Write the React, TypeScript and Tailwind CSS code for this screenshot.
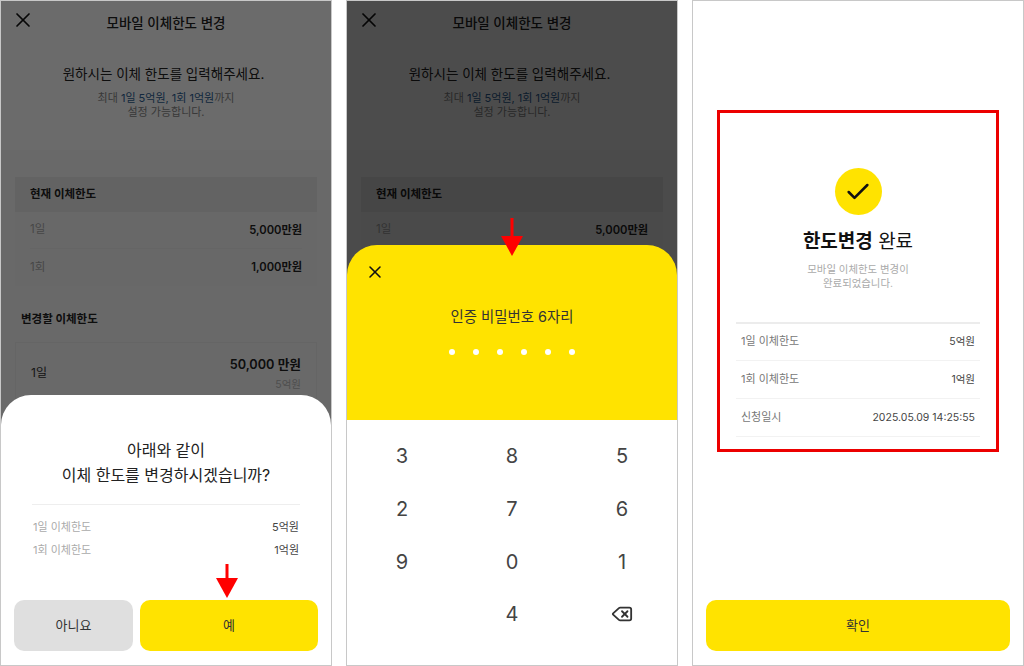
import React from "react";
import { X, Check, Delete } from "lucide-react";

function Arrow({ className, stem }: { className: string; stem: number }) {
  return (
    <svg className={className} width="24" height={stem + 20} viewBox={`0 0 24 ${stem + 20}`} aria-hidden="true">
      <rect x="10.5" y="0" width="3" height={stem + 2} fill="#ff0000" />
      <polygon points={`1,${stem} 23,${stem} 12,${stem + 20}`} fill="#ff0000" />
    </svg>
  );
}

function Background({ dim }: { dim: string }) {
  return (
    <div className="absolute inset-0 flex flex-col bg-white">
      <div className="relative h-[45px] shrink-0 flex items-center justify-center">
        <X className="absolute left-[10px] top-[7px] text-[#111]" size={24} strokeWidth={1.7} />
        <span className="text-[13.5px] font-medium text-[#222]">모바일 이체한도 변경</span>
      </div>
      <div className="h-[104px] shrink-0 flex flex-col items-center pt-[17px]">
        <p className="text-[13.5px] leading-[22px] text-[#222] mr-[5px]">원하시는 이체 한도를 입력해주세요.</p>
        <p className="text-[11px] leading-[14px] mt-[6px] text-[#888] text-center">
          최대 <span className="text-[#2c5e93]">1일 5억원, 1회 1억원</span>까지
          <br />
          설정 가능합니다.
        </p>
      </div>
      <div className="flex-1 bg-[#fafafa] px-[14px] pt-[27px]">
        <div className="h-[35px] flex items-center bg-[#ececec] px-[15px] text-[11.5px] font-bold text-[#222]">현재 이체한도</div>
        <div className="bg-[#f8f8f8] px-[15px] h-[74px] flex flex-col">
          <div className="h-[37px] flex items-center justify-between border-b border-[#f0f0f0] text-[#aaa] text-[11.5px]">
            <span>1일</span>
            <span className="font-semibold text-[11.2px] text-[#222]">5,000만원</span>
          </div>
          <div className="h-[37px] flex items-center justify-between text-[#aaa] text-[11.5px]">
            <span>1회</span>
            <span className="font-semibold text-[11.2px] text-[#222]">1,000만원</span>
          </div>
        </div>
        <p className="mt-[25px] ml-[6px] text-[11.5px] font-bold text-[#222]">변경할 이체한도</p>
        <div className="mt-[14px] h-[100px] border border-[#f0f0f0] px-[15px] pt-[12px] flex justify-between">
          <span className="text-[12px] text-[#333] mt-[9px]">1일</span>
          <div className="flex flex-col items-end">
            <span className="text-[12.7px] leading-[20px] font-semibold text-[#222]">50,000 만원</span>
            <span className="text-[10.5px] leading-[14px] mt-[3px] text-[#bbb]">5억원</span>
          </div>
        </div>
      </div>
      <div className={`absolute inset-0 ${dim}`} />
    </div>
  );
}

function Phone({ children }: { children: React.ReactNode }) {
  return (
    <div className="relative w-[332px] h-[666px] shrink-0 border border-[#c8c8c8] overflow-hidden bg-white flex flex-col">
      {children}
    </div>
  );
}

function ConfirmSheet() {
  return (
    <div className="absolute left-0 right-0 bottom-0 h-[270px] bg-white rounded-t-[30px] flex flex-col px-[13px]">
      <div className="pt-[43px] text-center text-[16px] leading-[25px] text-[#222]">
        아래와 같이
        <br />
        이체 한도를 변경하시겠습니까?
      </div>
      <div className="mx-[18px] mt-[16px] border-t border-[#eee] pt-[15px] flex flex-col gap-[8px] text-[11px] leading-[15px]">
        <div className="flex justify-between px-[1px]">
          <span className="text-[#aaa]">1일 이체한도</span>
          <span className="text-[#444]">5억원</span>
        </div>
        <div className="flex justify-between px-[1px]">
          <span className="text-[#aaa]">1회 이체한도</span>
          <span className="text-[#444]">1억원</span>
        </div>
      </div>
      <div className="mt-auto mb-[14px] flex gap-[7px] h-[51px]">
        <div className="w-[119px] rounded-[10px] bg-[#dfdfdf] flex items-center justify-center text-[13px] text-[#333]">아니요</div>
        <div className="flex-1 rounded-[10px] bg-[#ffe300] flex items-center justify-center text-[13px] text-[#333]">예</div>
      </div>
      <Arrow className="absolute left-[214px] top-[169px]" stem={14} />
    </div>
  );
}

function PinSheet() {
  const keys = ["3", "8", "5", "2", "7", "6", "9", "0", "1", "", "4"];
  return (
    <div className="absolute left-0 right-0 bottom-0 h-[420px] flex flex-col">
      <div className="h-[175px] shrink-0 bg-[#ffe300] rounded-t-[30px] flex flex-col items-center relative">
        <X className="absolute left-[18px] top-[17px] text-[#111]" size={20} strokeWidth={1.9} />
        <p className="mt-[61px] text-[14.4px] leading-[22px] text-[#333]">인증 비밀번호 6자리</p>
        <div className="mt-[21px] flex gap-[18.2px]">
          {[0, 1, 2, 3, 4, 5].map((i) => (
            <span key={i} className="w-[6px] h-[6px] rounded-full bg-white" />
          ))}
        </div>
      </div>
      <div className="flex-1 bg-white grid grid-cols-3 grid-rows-[repeat(4,52.7px)] pt-[10px] text-[20px] text-[#444]">
        {keys.map((k, i) => (
          <div key={i} className="flex items-center justify-center">{k}</div>
        ))}
        <div className="flex items-center justify-center text-[#333]">
          <Delete size={22} strokeWidth={2} />
        </div>
      </div>
    </div>
  );
}

function ResultRow({ label, value }: { label: string; value: string }) {
  return (
    <div className="h-[38px] flex items-center justify-between px-[5px] border-b border-[#f2f2f2] text-[11px]">
      <span className="text-[#777]">{label}</span>
      <span className="text-[10.5px] text-[#444]">{value}</span>
    </div>
  );
}

function ResultScreen() {
  return (
    <div className="flex-1 flex flex-col px-[13px] pt-[109px] pb-[14px]">
      <div className="mx-[11px] h-[342px] border-[3px] border-[#ec0000] flex flex-col items-center pt-[55px] px-[16px]">
        <div className="w-[47px] h-[47px] rounded-full bg-[#ffe300] flex items-center justify-center">
          <Check size={28} strokeWidth={2.2} className="text-[#111]" />
        </div>
        <p className="mt-[13px] text-[19px] leading-[28px] text-[#111]">
          <span className="font-bold">한도변경</span> 완료
        </p>
        <p className="mt-[7px] text-[10.4px] leading-[14px] text-[#aaa] text-center">
          모바일 이체한도 변경이
          <br />
          완료되었습니다.
        </p>
        <div className="mt-[31px] w-full border-t-2 border-[#ececec]">
          <div className="-mt-[1px]">
            <ResultRow label="1일 이체한도" value="5억원" />
            <ResultRow label="1회 이체한도" value="1억원" />
            <ResultRow label="신청일시" value="2025.05.09 14:25:55" />
          </div>
        </div>
      </div>
      <div className="mt-auto h-[51px] rounded-[10px] bg-[#ffe300] flex items-center justify-center text-[13px] text-[#333]">확인</div>
    </div>
  );
}

export default function App() {
  return (
    <div className="w-[1024px] h-[666px] bg-white flex gap-[14px] overflow-hidden font-['Inter','Noto_Sans_CJK_KR',sans-serif]">
      <Phone>
        <Background dim="bg-black/[0.58]" />
        <ConfirmSheet />
      </Phone>
      <Phone>
        <Background dim="bg-black/[0.7]" />
        <PinSheet />
        <Arrow className="absolute left-[153px] top-[217px]" stem={18} />
      </Phone>
      <Phone>
        <ResultScreen />
      </Phone>
    </div>
  );
}
